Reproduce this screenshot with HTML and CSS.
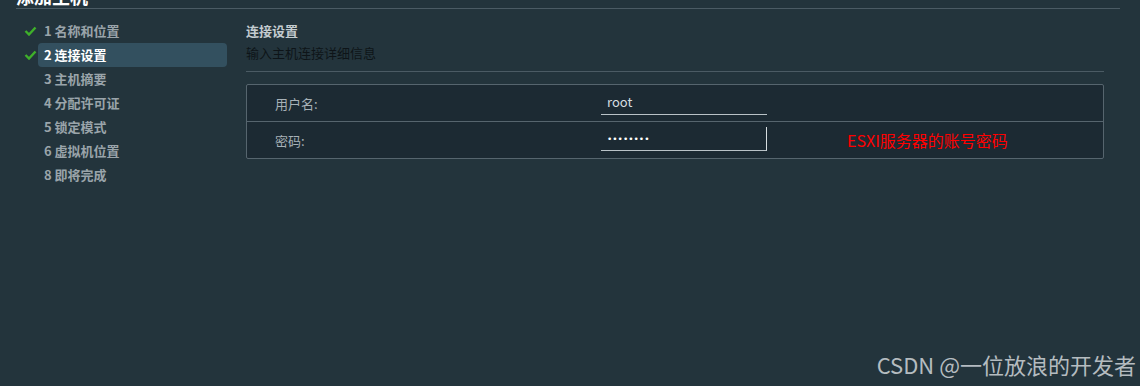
FILE: index.html
```html
<!DOCTYPE html>
<html lang="zh-CN">
<head>
    <meta charset="UTF-8">
    <meta name="viewport" content="width=device-width, initial-scale=1.0">
    <title>添加主机</title>
    <link rel="stylesheet" href="styles.css">
</head>
<body>
    <div class="header">
        <div class="title">添加主机</div>
    </div>
    <div class="main">
        <ul class="steps">
            <li class="step done">
                <span class="check"><svg width="13" height="10" viewBox="0 0 13 10"><polyline points="1.5,5 5,8.5 11.5,1.5" fill="none" stroke="#3fb02a" stroke-width="2.4"/></svg></span>
                <span class="label">1 名称和位置</span>
            </li>
            <li class="step done active">
                <span class="check"><svg width="13" height="10" viewBox="0 0 13 10"><polyline points="1.5,5 5,8.5 11.5,1.5" fill="none" stroke="#3fb02a" stroke-width="2.4"/></svg></span>
                <span class="label">2 连接设置</span>
            </li>
            <li class="step"><span class="check"></span><span class="label">3 主机摘要</span></li>
            <li class="step"><span class="check"></span><span class="label">4 分配许可证</span></li>
            <li class="step"><span class="check"></span><span class="label">5 锁定模式</span></li>
            <li class="step"><span class="check"></span><span class="label">6 虚拟机位置</span></li>
            <li class="step"><span class="check"></span><span class="label">8 即将完成</span></li>
        </ul>
        <div class="content">
            <div class="section-title">连接设置</div>
            <div class="section-desc">输入主机连接详细信息</div>
            <div class="form-table">
                <div class="form-row">
                    <div class="form-label">用户名:</div>
                    <div class="form-field"><div class="input">root</div></div>
                </div>
                <div class="form-row">
                    <div class="form-label">密码:</div>
                    <div class="form-field"><div class="input password">&bull;&bull;&bull;&bull;&bull;&bull;&bull;&bull;</div></div>
                    <div class="note">ESXI服务器的账号密码</div>
                </div>
            </div>
        </div>
    </div>
    <div class="watermark">CSDN @一位放浪的开发者</div>
</body>
</html>
```

FILE: styles.css
```css
body {
    margin: 0;
    height: 386px;
    overflow: hidden;
    background-color: #23343c;
    font-family: 'Noto Sans CJK SC', 'Noto Sans', sans-serif;
    font-size: 13px;
    color: #c9d1d5;
}
.header {
    height: 8px;
    margin: 0 20px 0 16px;
    border-bottom: 1px solid #4b5b64;
    overflow: hidden;
}
.title {
    margin-top: -15px;
    font-size: 18px;
    font-weight: bold;
    color: #ffffff;
    line-height: 22px;
}
.main {
    display: flex;
    gap: 19px;
    padding-top: 10px;
}
.steps {
    list-style: none;
    margin: 0;
    padding: 0 0 0 24px;
    width: 203px;
}
.step {
    display: flex;
    align-items: center;
    height: 24px;
}
.check {
    width: 14px;
    height: 24px;
    display: flex;
    align-items: center;
}
.label {
    flex: 1;
    height: 24px;
    line-height: 24px;
    padding-left: 6px;
    font-weight: bold;
    color: #9aa4aa;
    border-radius: 4px;
}
.step.active .label {
    background-color: #33505f;
    color: #ffffff;
}
.content {
    width: 858px;
    padding-top: 2px;
}
.section-title {
    font-weight: bold;
    color: #c4ccd0;
    line-height: 20px;
}
.section-desc {
    color: #0e1418;
    line-height: 24px;
    padding-bottom: 6px;
    border-bottom: 1px solid #4b5b64;
}
.form-table {
    margin-top: 12px;
    border: 1px solid #56656e;
    border-radius: 2px;
    background-color: #1c2a33;
}
.form-row {
    display: flex;
    align-items: center;
    height: 36px;
}
.form-row + .form-row {
    border-top: 1px solid #56656e;
}
.form-label {
    width: 326px;
    padding-left: 28px;
    color: #a7b1b7;
}
.form-field {
    width: 166px;
    align-self: flex-start;
    padding-top: 5px;
}
.input {
    height: 24px;
    line-height: 24px;
    padding-left: 6px;
    border-bottom: 1px solid #b9c2c7;
    color: #d6dde0;
}
.input.password {
    height: 23px;
    border-right: 1px solid #d6dde0;
    font-family: 'DejaVu Sans', sans-serif;
    font-size: 9px;
    color: #ffffff;
}
.note {
    margin-left: 80px;
    font-size: 16px;
    color: #ff0000;
}
.watermark {
    position: absolute;
    right: 4px;
    top: 349px;
    font-family: 'Noto Sans CJK SC', 'Noto Sans', sans-serif;
    font-size: 22px;
    color: #b5bcc0;
    line-height: 30px;
}
```
